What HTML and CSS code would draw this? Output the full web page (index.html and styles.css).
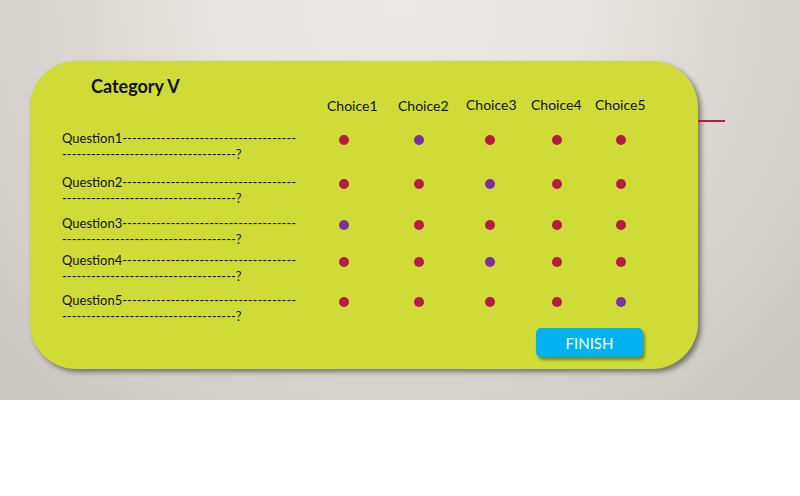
FILE: index.html
```html
<!DOCTYPE html>
<html>
<head>
<meta charset="utf-8">
<link rel="stylesheet" href="styles.css">
</head>
<body>
<div class="stage">
  <div class="card">
    <span class="connector"></span>
    <h1 class="title">Category V</h1>
    <div class="grid">
      <div class="head"></div>
      <div class="head">Choice1</div>
      <div class="head">Choice2</div>
      <div class="head">Choice3</div>
      <div class="head">Choice4</div>
      <div class="head">Choice5</div>

      <div class="q">Question1------------------------------------------------------------------------?</div>
      <div class="cell"><span class="dot"></span></div>
      <div class="cell"><span class="dot sel"></span></div>
      <div class="cell"><span class="dot"></span></div>
      <div class="cell"><span class="dot"></span></div>
      <div class="cell"><span class="dot"></span></div>

      <div class="q">Question2------------------------------------------------------------------------?</div>
      <div class="cell"><span class="dot"></span></div>
      <div class="cell"><span class="dot"></span></div>
      <div class="cell"><span class="dot sel"></span></div>
      <div class="cell"><span class="dot"></span></div>
      <div class="cell"><span class="dot"></span></div>

      <div class="q">Question3------------------------------------------------------------------------?</div>
      <div class="cell"><span class="dot sel"></span></div>
      <div class="cell"><span class="dot"></span></div>
      <div class="cell"><span class="dot"></span></div>
      <div class="cell"><span class="dot"></span></div>
      <div class="cell"><span class="dot"></span></div>

      <div class="q">Question4------------------------------------------------------------------------?</div>
      <div class="cell"><span class="dot"></span></div>
      <div class="cell"><span class="dot"></span></div>
      <div class="cell"><span class="dot sel"></span></div>
      <div class="cell"><span class="dot"></span></div>
      <div class="cell"><span class="dot"></span></div>

      <div class="q">Question5------------------------------------------------------------------------?</div>
      <div class="cell"><span class="dot"></span></div>
      <div class="cell"><span class="dot"></span></div>
      <div class="cell"><span class="dot"></span></div>
      <div class="cell"><span class="dot"></span></div>
      <div class="cell"><span class="dot sel"></span></div>
    </div>
    <div class="actions">
      <button class="finish">FINISH</button>
    </div>
  </div>
</div>
</body>
</html>
```
FILE: styles.css
```css
html, body {
  margin: 0;
  padding: 0;
  background: #ffffff;
}
body {
  font-family: "Lato", "Open Sans", sans-serif;
  color: #111;
}
.stage {
  height: 400px;
  padding-top: 61px;
  box-sizing: border-box;
  padding-left: 30px;
  background: radial-gradient(ellipse 520px 520px at 50% 0, #ebe9e5 0%, #e7e5e1 35%, #d6d2cd 75%, #cbc7c2 100%);
}
.card {
  position: relative;
  width: 668px;
  box-sizing: border-box;
  padding: 15px 55px 12px 32px;
  background: #cfdc38;
  border-radius: 46px;
  box-shadow: 3px 3px 5px rgba(0, 0, 0, 0.45);
}
.connector {
  position: absolute;
  left: 668px;
  top: 59px;
  width: 27px;
  height: 2px;
  background: #c0184b;
}
.title {
  margin: 0 0 0 29px;
  font-size: 18px;
  line-height: 21px;
  font-weight: 700;
}
.grid {
  display: grid;
  grid-template-columns: 245px 74px 76px 66px 68px 60px;
  grid-template-rows: 33px 44px 41px 37px 40px 32px;
}
.head {
  font-size: 14px;
  line-height: 17px;
  white-space: nowrap;
}
.head:nth-child(2) { padding-left: 20px; }
.head:nth-child(3) { padding-left: 17px; }
.head:nth-child(4) { padding-left: 9px; margin-top: -1px; }
.head:nth-child(5) { padding-left: 8px; margin-top: -1px; }
.head:nth-child(6) { padding-left: 4px; margin-top: -1px; }
.q {
  font-size: 13px;
  line-height: 16px;
  width: 238px;
  word-break: break-all;
}
.cell {
  display: flex;
  justify-content: center;
  align-items: flex-start;
  padding-top: 5px;
}
.dot {
  width: 10px;
  height: 10px;
  border-radius: 50%;
  background: #b71b45;
}
.dot.sel {
  background: #7a31a2;
}
.actions {
  display: flex;
  justify-content: flex-end;
  margin-top: 4px;
}
.finish {
  width: 107px;
  height: 29px;
  border: none;
  border-radius: 5px;
  background: #00b2f0;
  color: #fff;
  font-family: "Lato", "Open Sans", sans-serif;
  font-size: 15px;
  box-shadow: 2px 3px 3px rgba(60, 70, 0, 0.55);
  padding: 0;
}
```
